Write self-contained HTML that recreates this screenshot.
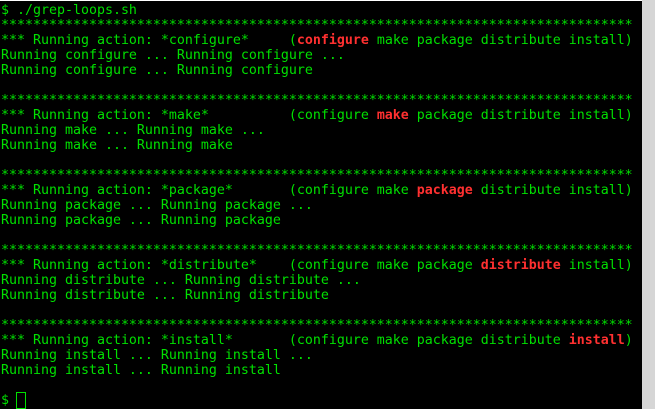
<!DOCTYPE html>
<html><head><style>
html,body{margin:0;padding:0;background:#000;width:655px;height:409px;overflow:hidden}
#t{position:absolute;left:0;top:0;width:642px;height:409px;background:#000;border-top:1px solid #fff;box-sizing:border-box}
#sb{position:absolute;left:642px;top:0;width:13px;height:409px;background:#d6d6d6}
#th{position:absolute;left:645px;top:383px;width:8px;height:26px;background:#a0a0a0;border-radius:3px 3px 0 0}
pre{position:absolute;left:1px;top:2px;margin:0;font-family:"DejaVu Sans Mono","Liberation Mono",monospace;font-size:13.29px;line-height:15px;color:#00e000;white-space:pre}
b{color:#ff3030}
#cur{position:absolute;left:16px;top:391px;width:8px;height:15px;border:1px solid #00e000}
</style></head><body>
<div id="t"><pre>$ ./grep-loops.sh
*******************************************************************************
*** Running action: *configure*     (<b>configure</b> make package distribute install)
Running configure ... Running configure ...
Running configure ... Running configure

*******************************************************************************
*** Running action: *make*          (configure <b>make</b> package distribute install)
Running make ... Running make ...
Running make ... Running make

*******************************************************************************
*** Running action: *package*       (configure make <b>package</b> distribute install)
Running package ... Running package ...
Running package ... Running package

*******************************************************************************
*** Running action: *distribute*    (configure make package <b>distribute</b> install)
Running distribute ... Running distribute ...
Running distribute ... Running distribute

*******************************************************************************
*** Running action: *install*       (configure make package distribute <b>install</b>)
Running install ... Running install ...
Running install ... Running install

$ </pre><div id="cur"></div></div>
<div id="sb"><div id="th"></div></div>
</body></html>
